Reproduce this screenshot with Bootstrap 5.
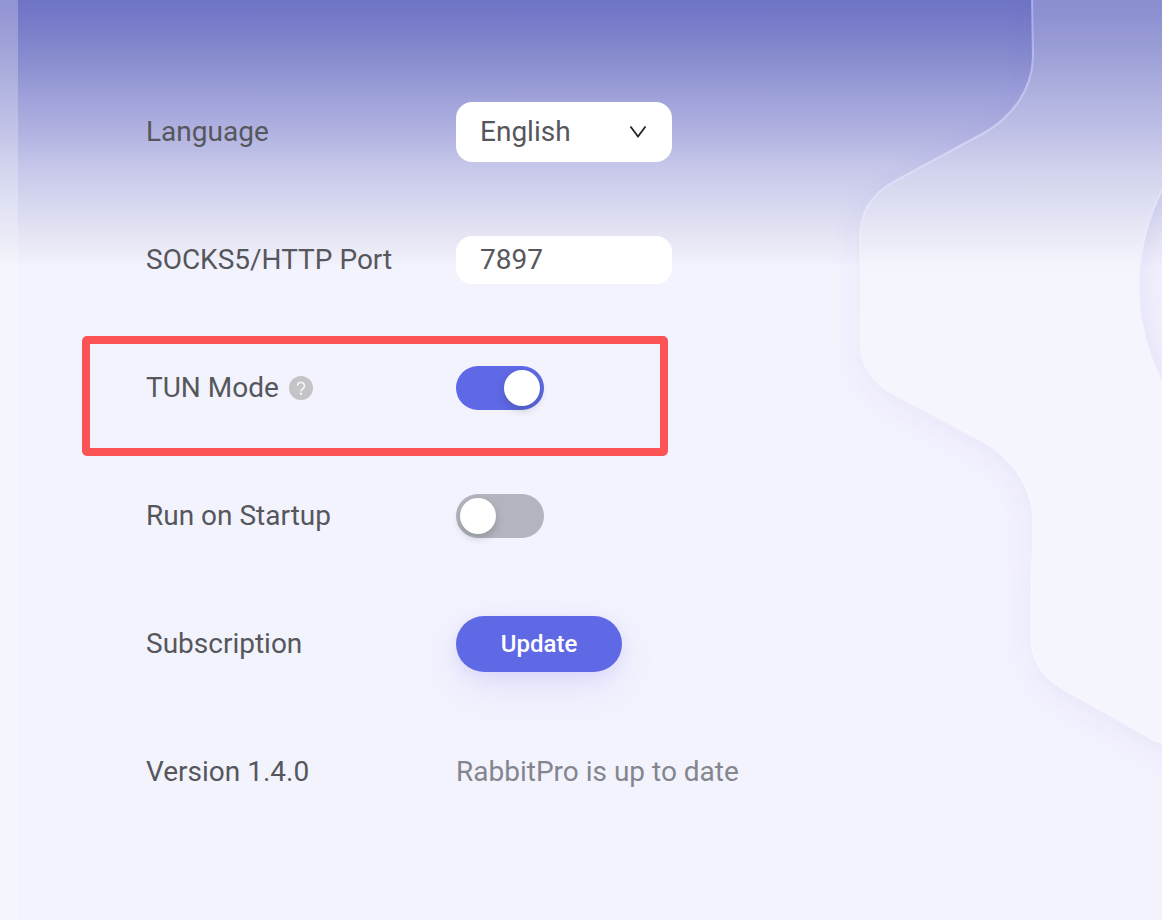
<!DOCTYPE html>
<html lang="en">
<head>
<meta charset="utf-8">
<meta name="viewport" content="width=device-width, initial-scale=1">
<title>RabbitPro Settings</title>
<link href="https://cdn.jsdelivr.net/npm/bootstrap@5.3.0/dist/css/bootstrap.min.css" rel="stylesheet">
<style>
  :root { --ink: #56575c; --accent: #5f69e6; }
  body {
    font-family: Roboto, sans-serif;
    font-size: 28px;
    line-height: 36px;
    color: var(--ink);
    background: #f3f3fe linear-gradient(#7074c6 0, #7478c7 15px, #898dcf 60px, #a0a3da 100px, #b4b5e2 138px, #c6c7e9 167px, #d4d6ef 200px, #e5e5f4 236px, #f3f3fe 268px) no-repeat;
  }
  .side-rail { width: 18px; background: rgba(255, 255, 255, .24); }
  .gear-art { width: 362px; height: 920px; pointer-events: none; }
  .settings-form { padding: 68px 24px 68px 128px; }
  .setting-row { min-height: 128px; }
  .setting-name { width: 310px; }
  .field { width: 216px; border: 0; border-radius: 16px; font-size: 28px; line-height: 36px; color: var(--ink); background-color: #fff; }
  .field:focus { color: var(--ink); background-color: #fff; }
  .language-field {
    height: 60px;
    padding: 12px 56px 12px 24px;
    background-image: url("data:image/svg+xml,%3Csvg xmlns='http://www.w3.org/2000/svg' viewBox='0 0 20 20'%3E%3Cpath d='M2.500 4.500 10 14.500 17.500 4.500' fill='none' stroke='%23222' stroke-width='1.800'/%3E%3C/svg%3E");
    background-size: 20px 20px;
    background-position: right 24px center;
  }
  .port-field { height: 48px; padding: 5px 24px 7px; }
  .toggle.form-check-input {
    position: relative;
    width: 88px; height: 44px;
    margin: 0; border: 0; border-radius: 22px;
    background-color: #b4b4bf;
    background-image: none !important;
  }
  .toggle.form-check-input:checked { background-color: var(--accent); }
  .toggle::before {
    content: "";
    position: absolute; top: 4px; left: 4px;
    width: 36px; height: 36px; border-radius: 50%;
    background: #fff;
    box-shadow: 0 4px 8px rgba(0, 35, 11, .2);
  }
  .toggle:checked::before { left: 48px; }
  .highlight-frame { top: 12px; bottom: -4px; left: -64px; width: 586px; border: 8px solid #fb5356; border-radius: 5px; pointer-events: none; }
  .update-btn {
    --bs-btn-color: #fff; --bs-btn-bg: var(--accent);
    --bs-btn-hover-color: #fff; --bs-btn-hover-bg: #525cda;
    --bs-btn-active-color: #fff; --bs-btn-active-bg: #4852cd;
    width: 166px; height: 56px; padding: 0; border: 0;
    font-size: 24px; font-weight: 500;
    box-shadow: 0 16px 40px rgba(95, 80, 230, .1), 0 4px 16px rgba(95, 80, 230, .1);
  }
  .status-note { color: #85868d; }
</style>
</head>
<body>
<svg class="gear-art position-absolute top-0 end-0" viewBox="800 0 362 920" aria-hidden="true">
  <defs>
    <filter id="soft" x="-20%" y="-20%" width="140%" height="140%"><feGaussianBlur stdDeviation="14"/></filter>
    <path id="gear" d="M1240 -60H1032V0L1033 57C1032 90 1012 118 982 134L893 182C872 194 860 212 860 237V343C860 365 873 383 893 394L980 440C1012 457 1033 488 1033 520V552Q1031 560 1031 600V637C1031 660 1043 678 1063 689L1155 741L1240 770Z"/>
    <mask id="outside" maskUnits="userSpaceOnUse" x="780" y="-80" width="480" height="1020">
      <rect x="780" y="-80" width="480" height="1020" fill="#fff"/>
      <use href="#gear" fill="#000"/>
    </mask>
    <clipPath id="holeClip"><circle cx="1349" cy="286" r="210"/></clipPath>
    <mask id="body" maskUnits="userSpaceOnUse" x="780" y="-80" width="480" height="1020">
      <use href="#gear" fill="#fff"/><circle cx="1349" cy="286" r="210" fill="#000"/>
    </mask>
    <linearGradient id="edge" gradientUnits="userSpaceOnUse" x1="0" y1="0" x2="0" y2="500">
      <stop offset="0" stop-color="#c4c6fa" stop-opacity=".6"/><stop offset=".5" stop-color="#f0f0ff" stop-opacity=".7"/><stop offset="1" stop-color="#fff" stop-opacity=".35"/>
    </linearGradient>
  </defs>
  <g mask="url(#outside)"><use href="#gear" y="8" fill="#6558c8" fill-opacity=".08" filter="url(#soft)"/></g>
  <g mask="url(#body)"><use href="#gear" fill="#fff" fill-opacity=".19"/></g>
  <g clip-path="url(#holeClip)"><circle cx="1349" cy="286" r="220" fill="none" stroke="#6558c8" stroke-opacity=".09" stroke-width="40" filter="url(#soft)"/></g>
  <use href="#gear" fill="none" stroke="url(#edge)" stroke-width="2"/>
  <circle cx="1349" cy="286" r="210" fill="none" stroke="url(#edge)" stroke-width="2"/>
</svg>

<div class="d-flex min-vh-100 position-relative">
  <div class="side-rail flex-shrink-0"></div>
  <main class="flex-grow-1">
    <form class="settings-form">
      <div class="setting-row d-flex align-items-center">
        <label class="setting-name" for="language">Language</label>
        <select class="form-select field language-field" id="language"><option>English</option></select>
      </div>
      <div class="setting-row d-flex align-items-center">
        <label class="setting-name" for="port">SOCKS5/HTTP Port</label>
        <input class="form-control field port-field" id="port" type="text" inputmode="numeric" value="7897">
      </div>
      <div class="setting-row d-flex align-items-center position-relative">
        <div class="setting-name d-flex align-items-center">
          <label for="tun">TUN Mode</label>
          <svg class="ms-2" width="28" height="28" viewBox="0 0 28 28" role="img" aria-label="Help">
            <circle cx="14" cy="14" r="12" fill="#c4c4c6"/>
            <path d="M10.500 11.800a3.500 3.500 0 1 1 5.400 2.900c-1.300.9-1.900 1.300-1.900 2.800" fill="none" stroke="#f5f5fa" stroke-width="1.600"/>
            <circle cx="14" cy="19.800" r="1.200" fill="#f5f5fa"/>
          </svg>
        </div>
        <input class="form-check-input toggle" id="tun" type="checkbox" role="switch" checked>
        <span class="highlight-frame position-absolute"></span>
      </div>
      <div class="setting-row d-flex align-items-center">
        <label class="setting-name" for="startup">Run on Startup</label>
        <input class="form-check-input toggle" id="startup" type="checkbox" role="switch">
      </div>
      <div class="setting-row d-flex align-items-center">
        <span class="setting-name" id="subscription">Subscription</span>
        <button class="btn rounded-pill update-btn" type="button" aria-describedby="subscription">Update</button>
      </div>
      <div class="setting-row d-flex align-items-center">
        <span class="setting-name">Version 1.4.0</span>
        <span class="status-note">RabbitPro is up to date</span>
      </div>
    </form>
  </main>
</div>
<script src="https://cdn.jsdelivr.net/npm/bootstrap@5.3.0/dist/js/bootstrap.bundle.min.js"></script>
</body>
</html>
